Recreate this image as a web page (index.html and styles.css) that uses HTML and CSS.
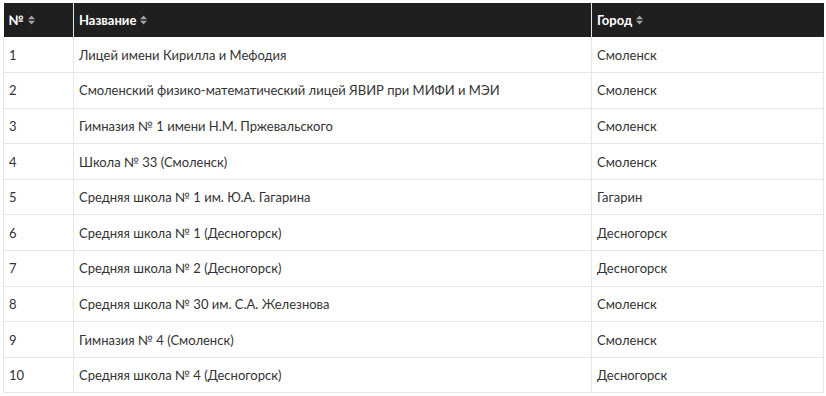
FILE: index.html
```html
<!DOCTYPE html>
<html lang="ru">
<head>
<meta charset="utf-8">
<title>Школы</title>
<link rel="stylesheet" href="styles.css">
</head>
<body>
<table class="schools">
  <colgroup>
    <col class="c-num">
    <col class="c-name">
    <col class="c-city">
  </colgroup>
  <thead>
    <tr>
      <th><span class="th-in">№<svg class="sort" viewBox="0 0 7 10" width="7" height="10"><path d="M3.5 0.5 L7 4.2 L0 4.2 Z M3.5 9.5 L7 5.8 L0 5.8 Z"/></svg></span></th>
      <th><span class="th-in">Название<svg class="sort" viewBox="0 0 7 10" width="7" height="10"><path d="M3.5 0.5 L7 4.2 L0 4.2 Z M3.5 9.5 L7 5.8 L0 5.8 Z"/></svg></span></th>
      <th><span class="th-in">Город<svg class="sort" viewBox="0 0 7 10" width="7" height="10"><path d="M3.5 0.5 L7 4.2 L0 4.2 Z M3.5 9.5 L7 5.8 L0 5.8 Z"/></svg></span></th>
    </tr>
  </thead>
  <tbody>
    <tr><td>1</td><td>Лицей имени Кирилла и Мефодия</td><td>Смоленск</td></tr>
    <tr><td>2</td><td>Смоленский физико-математический лицей ЯВИР при МИФИ и МЭИ</td><td>Смоленск</td></tr>
    <tr><td>3</td><td>Гимназия № 1 имени Н.М. Пржевальского</td><td>Смоленск</td></tr>
    <tr><td>4</td><td>Школа № 33 (Смоленск)</td><td>Смоленск</td></tr>
    <tr><td>5</td><td>Средняя школа № 1 им. Ю.А. Гагарина</td><td>Гагарин</td></tr>
    <tr><td>6</td><td>Средняя школа № 1 (Десногорск)</td><td>Десногорск</td></tr>
    <tr><td>7</td><td>Средняя школа № 2 (Десногорск)</td><td>Десногорск</td></tr>
    <tr><td>8</td><td>Средняя школа № 30 им. С.А. Железнова</td><td>Смоленск</td></tr>
    <tr><td>9</td><td>Гимназия № 4 (Смоленск)</td><td>Смоленск</td></tr>
    <tr><td>10</td><td>Средняя школа № 4 (Десногорск)</td><td>Десногорск</td></tr>
  </tbody>
</table>
</body>
</html>
```

FILE: styles.css
```css
html, body {
  margin: 0;
  padding: 0;
  background: #ffffff;
}
body {
  padding: 3px;
  font-family: Lato, "Open Sans", "Liberation Sans", sans-serif;
  font-size: 13px;
  color: #333333;
}
.schools {
  width: 820px;
  border-collapse: collapse;
  table-layout: fixed;
}
.c-num { width: 70px; }
.c-name { width: 518px; }
.c-city { width: 232px; }
.schools th {
  background: #1f1f1f;
  color: #ffffff;
  font-weight: 700;
  text-align: left;
  height: 34px;
  padding: 0 5px;
  border-left: 1px solid #e6e6e6;
  box-sizing: border-box;
}
.schools th:first-child { border-left: none; }
.th-in {
  display: inline-flex;
  align-items: center;
  gap: 4px;
}
.sort {
  fill: #a3a3a3;
  display: block;
  width: 7px;
  height: 10px;
}
.schools td {
  height: 35.6px;
  padding: 0 5px;
  border: 1px solid #e6e6e6;
  box-sizing: border-box;
  vertical-align: middle;
}
.schools tbody tr:first-child td { border-top: none; }
```
